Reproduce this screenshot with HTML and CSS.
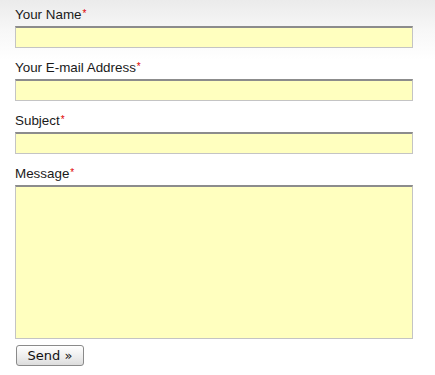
FILE: index.html
```html
<!DOCTYPE html>
<html>
<head>
<meta charset="utf-8">
<link rel="stylesheet" href="styles.css">
</head>
<body>
<form class="contact">
  <div class="field">
    <label class="label">Your Name<span class="req">*</span></label>
    <input class="input" type="text">
  </div>
  <div class="field">
    <label class="label">Your E-mail Address<span class="req">*</span></label>
    <input class="input" type="text">
  </div>
  <div class="field">
    <label class="label">Subject<span class="req">*</span></label>
    <input class="input" type="text">
  </div>
  <div class="field">
    <label class="label">Message<span class="req">*</span></label>
    <textarea class="input area"></textarea>
  </div>
  <button class="send" type="button">Send »</button>
</form>
</body>
</html>
```
FILE: styles.css
```css
html, body {
  margin: 0;
  padding: 0;
}
body {
  width: 435px;
  height: 375px;
  background: linear-gradient(#ebebeb 0px, #f7f7f7 30px, #ffffff 60px, #ffffff 100%);
  font-family: "Liberation Sans", Arial, sans-serif;
  color: #1a1a1a;
}
.contact {
  display: flex;
  flex-direction: column;
  padding: 5px 22px 0 15px;
}
.field {
  display: flex;
  flex-direction: column;
  margin-bottom: 10px;
}
.field:last-of-type {
  margin-bottom: 6px;
}
.label {
  display: block;
  font-size: 13.4px;
  line-height: 17px;
  height: 17px;
  margin-bottom: 4px;
}
.req {
  color: #e00000;
  font-size: 10px;
  vertical-align: 2px;
  margin-left: 1px;
}
.input {
  box-sizing: border-box;
  width: 398px;
  height: 22px;
  margin: 0;
  padding: 2px 4px;
  background: #ffffbf;
  border: 1px solid #c4c4c4;
  border-top: 2px solid #8c8c8c;
  outline: none;
  font: 13px "Liberation Sans", Arial, sans-serif;
}
.area {
  height: 154px;
  resize: none;
  display: block;
}
.send {
  align-self: flex-start;
  box-sizing: border-box;
  width: 68px;
  height: 21px;
  margin: 0 0 0 1px;
  padding: 0;
  font: 13px "DejaVu Sans", Verdana, sans-serif;
  color: #111;
  background: linear-gradient(#ffffff, #ececec 60%, #dcdcdc);
  border: 1px solid #8a8a8a;
  border-radius: 3px;
}
```
